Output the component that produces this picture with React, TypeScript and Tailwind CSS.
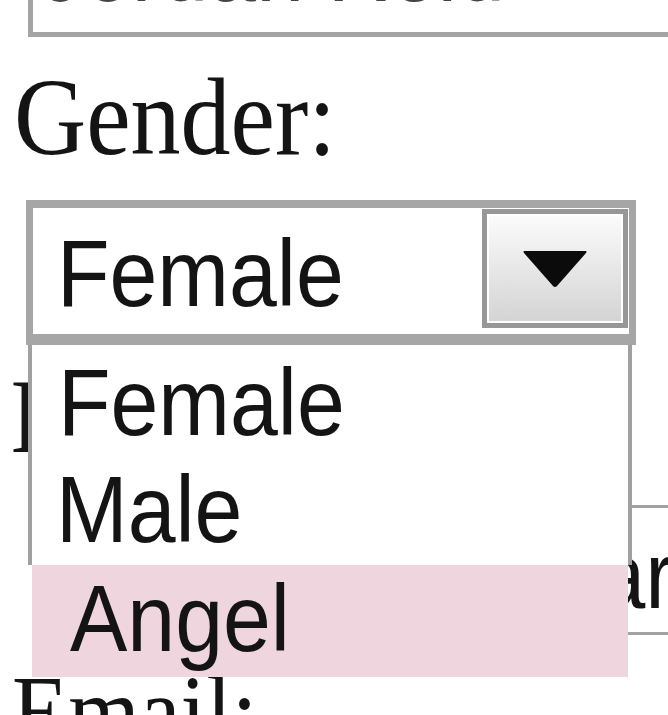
const sans = "font-['Liberation_Sans',Arial,sans-serif]";
const serif = "font-['Liberation_Serif','Times_New_Roman',serif]";

const Caret = () => (
  <svg width="66" height="38" viewBox="0 0 66 38">
    <path d="M2 1 H64 Q65 1 64 3 L35 36 Q33 38 31 36 L2 3 Q1 1 2 1 Z" fill="#0b0b0b" />
  </svg>
);

const App = () => {
  return (
    <div className="relative w-[668px] h-[715px] overflow-hidden bg-white text-[#141414]">
      <div className="flex flex-col">
        {/* name field, top cut off */}
        <div className="ml-[28px] h-[37px] border-l-[5px] border-b-[5px] border-[#a4a4a4] overflow-hidden">
          <div className={`-mt-[71px] pl-[8px] text-[86px] leading-none whitespace-nowrap text-[#444] ${sans}`}>
            <span className="inline-block origin-bottom scale-y-110">Jordan Reid</span>
          </div>
        </div>

        <div className={`mt-[36px] ml-[14px] h-[100px] text-[100px] leading-none ${serif}`}>
          <span className="inline-block origin-bottom scale-y-110">Gender:</span>
        </div>

        {/* select */}
        <div className="mt-[27px] ml-[26px] w-[610px] h-[145px] flex border-t-[8px] border-b-[11px] border-x-[7px] border-[#a6a6a6] bg-white">
          <div className={`flex-1 pt-[26px] pl-[24px] text-[86px] leading-none ${sans}`}>
            <span className="inline-block origin-bottom scale-y-110">Female</span>
          </div>
          <div className="w-[146px] h-[119px] mt-[1px] mr-[1px] border-[5px] border-[#979797]">
            <div className="h-full border-2 border-white bg-gradient-to-b from-[#fbfbfb] to-[#d4d4d4] flex items-center justify-center">
              <Caret />
            </div>
          </div>
        </div>

        {/* label hidden behind the list */}
        <div className={`mt-[29px] ml-[10px] h-[96px] text-[96px] leading-none whitespace-nowrap ${serif}`}>
          <span className="inline-block origin-bottom scale-y-110">Interests:</span>
        </div>

        {/* text field behind the list */}
        <div className="mt-[35px] ml-[60px] w-[700px] h-[130px] border-y-[3px] border-[#a2a2a2] overflow-hidden">
          <div className={`pt-[28px] pl-[265px] text-[86px] leading-none whitespace-nowrap ${sans}`}>
            <span className="inline-block origin-bottom scale-y-110">Calendar</span>
          </div>
        </div>

        <div className={`mt-[36px] ml-[12px] h-[92px] text-[92px] leading-none ${serif}`}>
          <span className="inline-block origin-bottom scale-y-110">Email:</span>
        </div>
      </div>

      {/* open option list */}
      <div className={`absolute left-[28px] top-[345px] w-[604px] text-[86px] leading-none ${sans}`}>
        <div className="h-[220px] border-x-[4px] border-[#a0a0a0] bg-white">
          <div className="h-[108px] pt-[18px] pl-[26px]">
            <span className="inline-block origin-bottom scale-y-110">Female</span>
          </div>
          <div className="h-[112px] pt-[17px] pl-[24px]">
            <span className="inline-block origin-bottom scale-y-110">Male</span>
          </div>
        </div>
        <div className="mx-[4px] h-[112px] pt-[14px] pl-[38px] bg-[#efd5de]">
          <span className="inline-block origin-bottom scale-y-110">Angel</span>
        </div>
      </div>
    </div>
  );
};

export default App;
